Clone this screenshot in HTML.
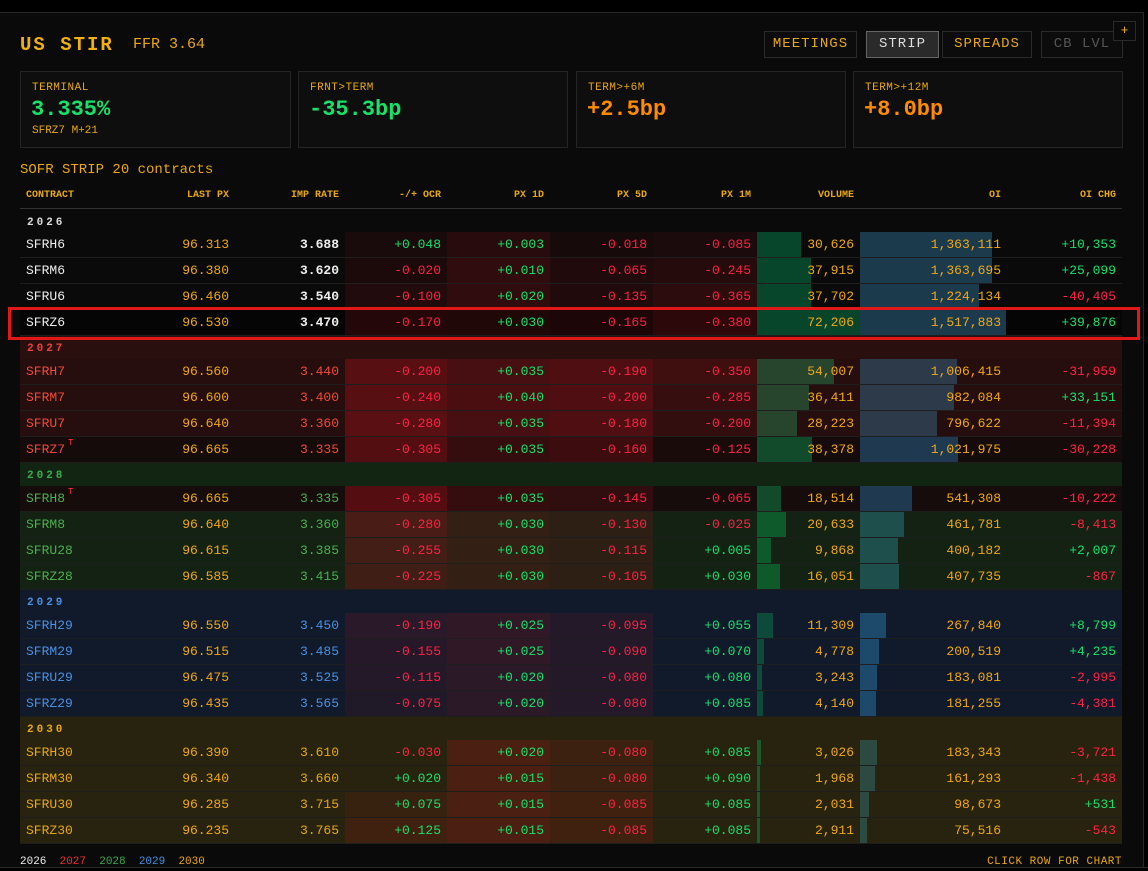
<!DOCTYPE html>
<html><head><meta charset="utf-8"><style>
*{margin:0;padding:0;box-sizing:border-box}
body{width:1148px;height:871px;background:#000;font-family:"Liberation Mono",monospace;overflow:hidden;position:relative;color:#e8a817}
.panel{position:absolute;left:0;top:12px;width:1144px;height:855px;background:#0a0a0a;border-top:1px solid #262626;border-right:1px solid #262626}
.abs{position:absolute;white-space:nowrap}
.btn{position:absolute;top:31px;height:27px;border:1px solid #2a2a2a;background:#0c0c0c;font-size:14px;letter-spacing:1px;line-height:25px;text-align:center;color:#e8a817}
.card{position:absolute;top:71px;height:77px;background:#0e0e0e;border:1px solid #242424}
.card .l{position:absolute;left:11px;top:10px;font-size:11px;color:#e8a817;letter-spacing:.5px}
.card .v{position:absolute;left:10px;top:25px;font-size:22px;font-weight:bold}
.card .s{position:absolute;left:11px;top:53px;font-size:11px}
.hdr{position:absolute;top:190px;left:20px;width:1102px;height:19px;border-bottom:1px solid #333;display:flex;font-size:10px;font-weight:bold}
.row,.grp{position:absolute;left:20px;width:1102px;display:flex}
.row{height:26px;border-bottom:1px solid #1e1e1e;font-size:13px;line-height:25px}
.grp{height:23px;font-size:11px;font-weight:bold;letter-spacing:3px;padding-left:7px;padding-top:7px}
.c{padding-right:6px;text-align:right;height:100%}
.c0{width:110px;text-align:left;padding-left:6px}
.c1{width:105px}.c2{width:110px}.c3{width:102px}.c4{width:103px}.c5{width:103px}.c6{width:104px}.c7{width:103px}.c8{width:147px}.c9{width:115px}
.G{color:#19e06a}.R{color:#ff2244}.Y{color:#f0a818}
sup{font-size:9px;color:#ff3344;vertical-align:top;line-height:0;position:relative;top:6px;margin-left:3px}
</style></head><body>
<div class="panel"></div>
<div class="abs" style="left:20px;top:34px;font-size:19px;font-weight:bold;letter-spacing:2px;color:#f0b010">US STIR</div>
<div class="abs" style="left:133px;top:36px;font-size:15px;color:#e8a817">FFR 3.64</div>
<div class="btn" style="left:764px;width:93px">MEETINGS</div>
<div class="btn" style="left:866px;width:73px;background:#2a2a2a;border-color:#666;color:#ddd">STRIP</div>
<div class="btn" style="left:942px;width:90px">SPREADS</div>
<div class="btn" style="left:1041px;width:82px;color:#555">CB LVL</div>
<div class="abs" style="left:1113px;top:21px;width:23px;height:20px;border:1px solid #2a2a2a;background:#0a0a0a;color:#f0b010;font-size:13px;text-align:center;line-height:17px">+</div>
<div class="card" style="left:20px;width:271px"><div class="l">TERMINAL</div><div class="v G">3.335%</div><div class="s">SFRZ7 M+21</div></div>
<div class="card" style="left:298px;width:270px"><div class="l">FRNT&gt;TERM</div><div class="v G">-35.3bp</div></div>
<div class="card" style="left:576px;width:270px"><div class="l">TERM&gt;+6M</div><div class="v" style="color:#ff8c00">+2.5bp</div></div>
<div class="card" style="left:853px;width:270px"><div class="l">TERM&gt;+12M</div><div class="v" style="color:#ff8c00">+8.0bp</div></div>
<div class="abs" style="left:20px;top:162px;font-size:14px;color:#e8a817">SOFR STRIP 20 contracts</div>
<div class="hdr"><div class="c c0">CONTRACT</div><div class="c c1">LAST PX</div><div class="c c2">IMP RATE</div><div class="c c3">-/+ OCR</div><div class="c c4">PX 1D</div><div class="c c5">PX 5D</div><div class="c c6">PX 1M</div><div class="c c7">VOLUME</div><div class="c c8">OI</div><div class="c c9">OI CHG</div></div>

<div class="grp" style="top:210px;background:#0a0a0a;color:#ddd">2026</div>
<div class="row" style="top:232px;background:#0a0a0a"><div class="c c0" style="color:#eee">SFRH6</div><div class="c c1 Y">96.313</div><div class="c c2" style="color:#eee;font-weight:bold">3.688</div><div class="c c3 G" style="background:rgba(200,20,30,.08)">+0.048</div><div class="c c4 G" style="background:rgba(200,20,30,.16)">+0.003</div><div class="c c5 R" style="background:rgba(200,20,30,.07)">-0.018</div><div class="c c6 R" style="background:rgba(200,20,30,.09)">-0.085</div><div class="c c7 Y" style="background:linear-gradient(90deg,#07462a 44px,transparent 44px)">30,626</div><div class="c c8 Y" style="background:linear-gradient(90deg,#1b3b4d 132px,transparent 132px)">1,363,111</div><div class="c c9 G">+10,353</div></div>
<div class="row" style="top:258px;background:#0a0a0a"><div class="c c0" style="color:#eee">SFRM6</div><div class="c c1 Y">96.380</div><div class="c c2" style="color:#eee;font-weight:bold">3.620</div><div class="c c3 R" style="background:rgba(200,20,30,.1)">-0.020</div><div class="c c4 G" style="background:rgba(200,20,30,.2)">+0.010</div><div class="c c5 R" style="background:rgba(200,20,30,.12)">-0.065</div><div class="c c6 R" style="background:rgba(200,20,30,.15)">-0.245</div><div class="c c7 Y" style="background:linear-gradient(90deg,#07462a 54px,transparent 54px)">37,915</div><div class="c c8 Y" style="background:linear-gradient(90deg,#1b3b4d 132px,transparent 132px)">1,363,695</div><div class="c c9 G">+25,099</div></div>
<div class="row" style="top:284px;background:#0a0a0a"><div class="c c0" style="color:#eee">SFRU6</div><div class="c c1 Y">96.460</div><div class="c c2" style="color:#eee;font-weight:bold">3.540</div><div class="c c3 R" style="background:rgba(200,20,30,.13)">-0.100</div><div class="c c4 G" style="background:rgba(200,20,30,.2)">+0.020</div><div class="c c5 R" style="background:rgba(200,20,30,.12)">-0.135</div><div class="c c6 R" style="background:rgba(200,20,30,.18)">-0.365</div><div class="c c7 Y" style="background:linear-gradient(90deg,#07462a 54px,transparent 54px)">37,702</div><div class="c c8 Y" style="background:linear-gradient(90deg,#1b3b4d 119px,transparent 119px)">1,224,134</div><div class="c c9 R">-40,405</div></div>
<div class="row" style="top:310px;background:#050505"><div class="c c0" style="color:#eee">SFRZ6</div><div class="c c1 Y">96.530</div><div class="c c2" style="color:#eee;font-weight:bold">3.470</div><div class="c c3 R" style="background:rgba(200,20,30,.16)">-0.170</div><div class="c c4 G" style="background:rgba(200,20,30,.14)">+0.030</div><div class="c c5 R" style="background:rgba(200,20,30,.12)">-0.165</div><div class="c c6 R" style="background:rgba(200,20,30,.2)">-0.380</div><div class="c c7 Y" style="background:#07462a">72,206</div><div class="c c8 Y" style="background:linear-gradient(90deg,#1b3b4d 146px,transparent 146px)">1,517,883</div><div class="c c9 G">+39,876</div></div>

<div class="grp" style="top:336px;background:#2a0f0f;color:#f04040">2027</div>
<div class="row" style="top:359px;background:#270e0e"><div class="c c0" style="color:#f04a3a">SFRH7</div><div class="c c1 Y">96.560</div><div class="c c2" style="color:#f04a3a">3.440</div><div class="c c3 R" style="background:rgba(200,20,30,.3)">-0.200</div><div class="c c4 G" style="background:rgba(200,20,30,.2)">+0.035</div><div class="c c5 R" style="background:rgba(200,20,30,.25)">-0.190</div><div class="c c6 R" style="background:rgba(200,20,30,.15)">-0.350</div><div class="c c7 Y" style="background:linear-gradient(90deg,#26452c 77px,transparent 77px)">54,007</div><div class="c c8 Y" style="background:linear-gradient(90deg,#2d3a4a 97px,transparent 97px)">1,006,415</div><div class="c c9 R">-31,959</div></div>
<div class="row" style="top:385px;background:#270e0e"><div class="c c0" style="color:#f04a3a">SFRM7</div><div class="c c1 Y">96.600</div><div class="c c2" style="color:#f04a3a">3.400</div><div class="c c3 R" style="background:rgba(200,20,30,.3)">-0.240</div><div class="c c4 G" style="background:rgba(200,20,30,.22)">+0.040</div><div class="c c5 R" style="background:rgba(200,20,30,.25)">-0.200</div><div class="c c6 R" style="background:rgba(200,20,30,.1)">-0.285</div><div class="c c7 Y" style="background:linear-gradient(90deg,#26452c 52px,transparent 52px)">36,411</div><div class="c c8 Y" style="background:linear-gradient(90deg,#2d3a4a 94px,transparent 94px)">982,084</div><div class="c c9 G">+33,151</div></div>
<div class="row" style="top:411px;background:#270e0e"><div class="c c0" style="color:#f04a3a">SFRU7</div><div class="c c1 Y">96.640</div><div class="c c2" style="color:#f04a3a">3.360</div><div class="c c3 R" style="background:rgba(200,20,30,.32)">-0.280</div><div class="c c4 G" style="background:rgba(200,20,30,.2)">+0.035</div><div class="c c5 R" style="background:rgba(200,20,30,.25)">-0.180</div><div class="c c6 R" style="background:rgba(200,20,30,.08)">-0.200</div><div class="c c7 Y" style="background:linear-gradient(90deg,#26452c 40px,transparent 40px)">28,223</div><div class="c c8 Y" style="background:linear-gradient(90deg,#2d3a4a 77px,transparent 77px)">796,622</div><div class="c c9 R">-11,394</div></div>
<div class="row" style="top:437px;background:#150b0b"><div class="c c0" style="color:#f04a3a">SFRZ7<sup>T</sup></div><div class="c c1 Y">96.665</div><div class="c c2" style="color:#f04a3a">3.335</div><div class="c c3 R" style="background:rgba(200,20,30,.35)">-0.305</div><div class="c c4 G" style="background:rgba(200,20,30,.18)">+0.035</div><div class="c c5 R" style="background:rgba(200,20,30,.22)">-0.160</div><div class="c c6 R" style="background:rgba(200,20,30,.03)">-0.125</div><div class="c c7 Y" style="background:linear-gradient(90deg,#124a2c 55px,transparent 55px)">38,378</div><div class="c c8 Y" style="background:linear-gradient(90deg,#1f3a50 98px,transparent 98px)">1,021,975</div><div class="c c9 R">-30,228</div></div>

<div class="grp" style="top:463px;background:#122412;color:#3faa50">2028</div>
<div class="row" style="top:486px;background:#160c0c"><div class="c c0" style="color:#4caf50">SFRH8<sup>T</sup></div><div class="c c1 Y">96.665</div><div class="c c2" style="color:#4caf50">3.335</div><div class="c c3 R" style="background:rgba(200,20,30,.35)">-0.305</div><div class="c c4 G" style="background:rgba(200,20,30,.18)">+0.035</div><div class="c c5 R" style="background:rgba(200,20,30,.15)">-0.145</div><div class="c c6 R">-0.065</div><div class="c c7 Y" style="background:linear-gradient(90deg,#124a2c 24px,transparent 24px)">18,514</div><div class="c c8 Y" style="background:linear-gradient(90deg,#1f3a50 52px,transparent 52px)">541,308</div><div class="c c9 R">-10,222</div></div>
<div class="row" style="top:512px;background:#132213"><div class="c c0" style="color:#4caf50">SFRM8</div><div class="c c1 Y">96.640</div><div class="c c2" style="color:#4caf50">3.360</div><div class="c c3 R" style="background:rgba(200,20,30,.3)">-0.280</div><div class="c c4 G" style="background:rgba(200,20,30,.18)">+0.030</div><div class="c c5 R" style="background:rgba(200,20,30,.15)">-0.130</div><div class="c c6 R">-0.025</div><div class="c c7 Y" style="background:linear-gradient(90deg,#0f5a2a 29px,transparent 29px)">20,633</div><div class="c c8 Y" style="background:linear-gradient(90deg,#1e4f4c 44px,transparent 44px)">461,781</div><div class="c c9 R">-8,413</div></div>
<div class="row" style="top:538px;background:#132213"><div class="c c0" style="color:#4caf50">SFRU28</div><div class="c c1 Y">96.615</div><div class="c c2" style="color:#4caf50">3.385</div><div class="c c3 R" style="background:rgba(200,20,30,.26)">-0.255</div><div class="c c4 G" style="background:rgba(200,20,30,.18)">+0.030</div><div class="c c5 R" style="background:rgba(200,20,30,.15)">-0.115</div><div class="c c6 G">+0.005</div><div class="c c7 Y" style="background:linear-gradient(90deg,#0f5a2a 14px,transparent 14px)">9,868</div><div class="c c8 Y" style="background:linear-gradient(90deg,#1e4f4c 38px,transparent 38px)">400,182</div><div class="c c9 G">+2,007</div></div>
<div class="row" style="top:564px;background:#132213"><div class="c c0" style="color:#4caf50">SFRZ28</div><div class="c c1 Y">96.585</div><div class="c c2" style="color:#4caf50">3.415</div><div class="c c3 R" style="background:rgba(200,20,30,.24)">-0.225</div><div class="c c4 G" style="background:rgba(200,20,30,.18)">+0.030</div><div class="c c5 R" style="background:rgba(200,20,30,.15)">-0.105</div><div class="c c6 G">+0.030</div><div class="c c7 Y" style="background:linear-gradient(90deg,#0f5a2a 23px,transparent 23px)">16,051</div><div class="c c8 Y" style="background:linear-gradient(90deg,#1e4f4c 39px,transparent 39px)">407,735</div><div class="c c9 R">-867</div></div>

<div class="grp" style="top:590px;background:#111a2a;color:#4a90e2">2029</div>
<div class="row" style="top:613px;background:#111a2a"><div class="c c0" style="color:#4a90e2">SFRH29</div><div class="c c1 Y">96.550</div><div class="c c2" style="color:#4a90e2">3.450</div><div class="c c3 R" style="background:rgba(200,20,30,.14)">-0.190</div><div class="c c4 G" style="background:rgba(200,20,30,.17)">+0.025</div><div class="c c5 R" style="background:rgba(200,20,30,.1)">-0.095</div><div class="c c6 G">+0.055</div><div class="c c7 Y" style="background:linear-gradient(90deg,#0e4a3a 16px,transparent 16px)">11,309</div><div class="c c8 Y" style="background:linear-gradient(90deg,#1d4a6a 26px,transparent 26px)">267,840</div><div class="c c9 G">+8,799</div></div>
<div class="row" style="top:639px;background:#111a2a"><div class="c c0" style="color:#4a90e2">SFRM29</div><div class="c c1 Y">96.515</div><div class="c c2" style="color:#4a90e2">3.485</div><div class="c c3 R" style="background:rgba(200,20,30,.12)">-0.155</div><div class="c c4 G" style="background:rgba(200,20,30,.17)">+0.025</div><div class="c c5 R" style="background:rgba(200,20,30,.1)">-0.090</div><div class="c c6 G">+0.070</div><div class="c c7 Y" style="background:linear-gradient(90deg,#0e4a3a 7px,transparent 7px)">4,778</div><div class="c c8 Y" style="background:linear-gradient(90deg,#1d4a6a 19px,transparent 19px)">200,519</div><div class="c c9 G">+4,235</div></div>
<div class="row" style="top:665px;background:#111a2a"><div class="c c0" style="color:#4a90e2">SFRU29</div><div class="c c1 Y">96.475</div><div class="c c2" style="color:#4a90e2">3.525</div><div class="c c3 R" style="background:rgba(200,20,30,.1)">-0.115</div><div class="c c4 G" style="background:rgba(200,20,30,.15)">+0.020</div><div class="c c5 R" style="background:rgba(200,20,30,.1)">-0.080</div><div class="c c6 G">+0.080</div><div class="c c7 Y" style="background:linear-gradient(90deg,#0e4a3a 5px,transparent 5px)">3,243</div><div class="c c8 Y" style="background:linear-gradient(90deg,#1d4a6a 17px,transparent 17px)">183,081</div><div class="c c9 R">-2,995</div></div>
<div class="row" style="top:691px;background:#111a2a"><div class="c c0" style="color:#4a90e2">SFRZ29</div><div class="c c1 Y">96.435</div><div class="c c2" style="color:#4a90e2">3.565</div><div class="c c3 R" style="background:rgba(200,20,30,.08)">-0.075</div><div class="c c4 G" style="background:rgba(200,20,30,.15)">+0.020</div><div class="c c5 R" style="background:rgba(200,20,30,.1)">-0.080</div><div class="c c6 G">+0.085</div><div class="c c7 Y" style="background:linear-gradient(90deg,#0e4a3a 6px,transparent 6px)">4,140</div><div class="c c8 Y" style="background:linear-gradient(90deg,#1d4a6a 16px,transparent 16px)">181,255</div><div class="c c9 R">-4,381</div></div>

<div class="grp" style="top:717px;background:#28230e;color:#e8a817">2030</div>
<div class="row" style="top:740px;background:#28230e"><div class="c c0" style="color:#e8a817">SFRH30</div><div class="c c1 Y">96.390</div><div class="c c2" style="color:#e8a817">3.610</div><div class="c c3 R">-0.030</div><div class="c c4 G" style="background:rgba(200,20,30,.22)">+0.020</div><div class="c c5 R" style="background:rgba(200,20,30,.13)">-0.080</div><div class="c c6 G">+0.085</div><div class="c c7 Y" style="background:linear-gradient(90deg,#1a5a2a 4px,transparent 4px)">3,026</div><div class="c c8 Y" style="background:linear-gradient(90deg,#2c4a40 17px,transparent 17px)">183,343</div><div class="c c9 R">-3,721</div></div>
<div class="row" style="top:766px;background:#28230e"><div class="c c0" style="color:#e8a817">SFRM30</div><div class="c c1 Y">96.340</div><div class="c c2" style="color:#e8a817">3.660</div><div class="c c3 G">+0.020</div><div class="c c4 G" style="background:rgba(200,20,30,.22)">+0.015</div><div class="c c5 R" style="background:rgba(200,20,30,.13)">-0.080</div><div class="c c6 G">+0.090</div><div class="c c7 Y" style="background:linear-gradient(90deg,#1a5a2a 3px,transparent 3px)">1,968</div><div class="c c8 Y" style="background:linear-gradient(90deg,#2c4a40 15px,transparent 15px)">161,293</div><div class="c c9 R">-1,438</div></div>
<div class="row" style="top:792px;background:#28230e"><div class="c c0" style="color:#e8a817">SFRU30</div><div class="c c1 Y">96.285</div><div class="c c2" style="color:#e8a817">3.715</div><div class="c c3 G" style="background:rgba(200,20,30,.1)">+0.075</div><div class="c c4 G" style="background:rgba(200,20,30,.22)">+0.015</div><div class="c c5 R" style="background:rgba(200,20,30,.15)">-0.085</div><div class="c c6 G">+0.085</div><div class="c c7 Y" style="background:linear-gradient(90deg,#1a5a2a 3px,transparent 3px)">2,031</div><div class="c c8 Y" style="background:linear-gradient(90deg,#2c4a40 9px,transparent 9px)">98,673</div><div class="c c9 G">+531</div></div>
<div class="row" style="top:818px;background:#28230e"><div class="c c0" style="color:#e8a817">SFRZ30</div><div class="c c1 Y">96.235</div><div class="c c2" style="color:#e8a817">3.765</div><div class="c c3 G" style="background:rgba(200,20,30,.15)">+0.125</div><div class="c c4 G" style="background:rgba(200,20,30,.22)">+0.015</div><div class="c c5 R" style="background:rgba(200,20,30,.15)">-0.085</div><div class="c c6 G">+0.085</div><div class="c c7 Y" style="background:linear-gradient(90deg,#1a5a2a 3px,transparent 3px)">2,911</div><div class="c c8 Y" style="background:linear-gradient(90deg,#2c4a40 7px,transparent 7px)">75,516</div><div class="c c9 R">-543</div></div>

<div class="abs" style="left:8px;top:307px;width:1132px;height:33px;border:3px solid #e01818"></div>

<div class="abs" style="left:20px;top:856px;font-size:11px"><span style="color:#eee">2026</span>&nbsp;&nbsp;<span style="color:#f03030">2027</span>&nbsp;&nbsp;<span style="color:#3faa50">2028</span>&nbsp;&nbsp;<span style="color:#4a90e2">2029</span>&nbsp;&nbsp;<span style="color:#e8a817">2030</span></div>
<div class="abs" style="right:26px;top:856px;font-size:11px;letter-spacing:.5px">CLICK ROW FOR CHART</div>
<div class="abs" style="left:0;top:867px;width:1148px;height:4px;background:#000;border-top:1px solid #2a2a2a"></div>
</body></html>
